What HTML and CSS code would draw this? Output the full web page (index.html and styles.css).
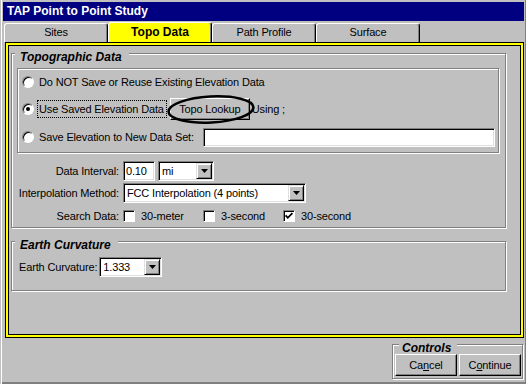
FILE: index.html
```html
<!DOCTYPE html>
<html>
<head>
<meta charset="utf-8">
<title>TAP Point to Point Study</title>
<link rel="stylesheet" href="styles.css">
</head>
<body>
<div class="window">
  <div class="titlebar">TAP Point to Point Study</div>
  <div class="tabs">
    <div class="tab">Sites</div>
    <div class="tab active">Topo Data</div>
    <div class="tab">Path Profile</div>
    <div class="tab">Surface</div>
  </div>
  <div class="panel">
    <div class="group topo">
      <div class="legend">Topographic Data</div>
      <div class="subframe">
        <div class="opt opt1"><span class="radio"></span><span class="opt-label">Do NOT Save or Reuse Existing Elevation Data</span></div>
        <div class="opt opt2"><span class="radio checked"></span><span class="opt-label focus">Use Saved Elevation Data</span><span class="button lookup">Topo Lookup<svg class="circle" viewBox="0 0 88 29" width="88" height="29"><ellipse cx="44" cy="14.5" rx="42.5" ry="13" transform="rotate(-3 44 14.5)" fill="none" stroke="#000" stroke-width="2.6"/></svg></span><span class="using">Using ;</span></div>
        <div class="opt opt3"><span class="radio"></span><span class="opt-label">Save Elevation to New Data Set:</span><span class="textbox dataset"></span></div>
      </div>
      <div class="field interval">
        <span class="label">Data Interval:</span>
        <span class="textbox interval-box">0.10</span>
        <span class="combo unit"><span class="combo-text">mi</span><span class="drop"><svg width="7" height="4" viewBox="0 0 7 4"><polygon points="0,0 7,0 3.5,4" fill="#000"/></svg></span></span>
      </div>
      <div class="field method-row">
        <span class="label">Interpolation Method:</span>
        <span class="combo method"><span class="combo-text">FCC Interpolation (4 points)</span><span class="drop"><svg width="7" height="4" viewBox="0 0 7 4"><polygon points="0,0 7,0 3.5,4" fill="#000"/></svg></span></span>
      </div>
      <div class="field search">
        <span class="label">Search Data:</span>
        <span class="check-item"><span class="checkbox"></span><span class="check-text">30-meter</span></span>
        <span class="check-item"><span class="checkbox"></span><span class="check-text">3-second</span></span>
        <span class="check-item"><span class="checkbox"><svg width="10" height="10" viewBox="0 0 10 10"><polyline points="1.6,4.4 3.8,6.8 8.4,2.2" fill="none" stroke="#000" stroke-width="1.8"/></svg></span><span class="check-text">30-second</span></span>
      </div>
    </div>
    <div class="group earth">
      <div class="legend">Earth Curvature</div>
      <div class="field earth-row">
        <span class="earth-label">Earth Curvature:</span>
        <span class="combo curv"><span class="combo-text">1.333</span><span class="drop"><svg width="7" height="4" viewBox="0 0 7 4"><polygon points="0,0 7,0 3.5,4" fill="#000"/></svg></span></span>
      </div>
    </div>
  </div>
  <div class="footer">
    <div class="group controls">
      <div class="legend">Controls</div>
      <div class="btnrow">
        <span class="button btn">Ca<u>n</u>cel</span>
        <span class="button btn">C<u>o</u>ntinue</span>
      </div>
    </div>
  </div>
</div>
</body>
</html>
```
FILE: styles.css
```css
html, body {
  margin: 0;
  padding: 0;
  background: #c0c0c0;
}
body {
  font-family: "Liberation Sans", Arial, sans-serif;
  font-size: 11px;
  letter-spacing: -0.15px;
  color: #000;
}
.window {
  width: 526px;
  height: 384px;
  box-sizing: border-box;
  padding: 2px 2px 0 3px;
  display: flex;
  flex-direction: column;
  overflow: hidden;
  box-shadow: inset 1px 0 0 #c0c0c0, inset 2px 0 0 #fff, inset 0 -2px 0 #808080, inset -1px 0 0 #808080;
}
.titlebar {
  height: 19px;
  flex: none;
  background: #000080;
  color: #fff;
  font-weight: bold;
  font-size: 12px;
  letter-spacing: 0;
  line-height: 19px;
  padding-left: 4px;
}
.tabs {
  display: flex;
  flex: none;
  height: 20px;
  margin-top: 1px;
  padding-left: 1px;
}
.tab {
  width: 104px;
  box-sizing: border-box;
  margin-top: 1px;
  height: 19px;
  border-top: 1px solid #fff;
  border-left: 1px solid #fff;
  border-right: 1px solid #000;
  box-shadow: inset -1px 0 0 #808080;
  border-radius: 3px 3px 0 0;
  text-align: center;
  line-height: 17px;
}
.tab.active {
  margin-top: 0;
  height: 20px;
  background: #ffff00;
  font-weight: bold;
  font-size: 12px;
  letter-spacing: 0;
  line-height: 19px;
}
.panel {
  flex: none;
  margin-left: 2px;
  height: 296px;
  box-sizing: border-box;
  border: 1px solid #000;
  box-shadow: inset 0 0 0 2px #ffff00, inset 0 0 0 3px #000;
  padding: 10px 0 0 5px;
  display: flex;
  flex-direction: column;
  align-items: flex-start;
}
.group {
  box-sizing: border-box;
  width: 495px;
  border: 1px solid #808080;
  box-shadow: inset 1px 1px 0 #fff, 1px 1px 0 #fff;
  display: flex;
  flex-direction: column;
  align-items: flex-start;
}
.legend {
  margin: -4px 0 0 3px;
  padding: 0 7px 0 5px;
  background: #c0c0c0;
  font-weight: bold;
  font-style: italic;
  font-size: 12px;
  letter-spacing: 0;
  line-height: 14px;
}
.subframe {
  margin: 4px 0 0 5px;
  width: 482px;
  box-sizing: border-box;
  border: 1px solid #808080;
  box-shadow: inset 1px 1px 0 #fff, 1px 1px 0 #fff;
  padding: 0 0 1px 4px;
}
.opt {
  display: flex;
  align-items: center;
}
.opt1 { height: 26px; }
.opt2 { height: 28px; }
.opt3 { height: 28px; }
.radio {
  flex: none;
  position: relative;
  width: 12px;
  height: 12px;
  box-sizing: border-box;
  border-radius: 50%;
  background: #fff;
  border: 1px solid;
  border-color: #808080 #fff #fff #808080;
  box-shadow: inset 1px 1px 0 #000;
}
.radio.checked::after {
  content: "";
  position: absolute;
  left: 3px;
  top: 3px;
  width: 4px;
  height: 4px;
  border-radius: 50%;
  background: #000;
}
.opt-label {
  margin-left: 3px;
  padding: 1px 2px 1px 1px;
  border: 1px dotted transparent;
  line-height: 14px;
  white-space: nowrap;
}
.opt-label.focus {
  border-color: #000;
}
.button {
  flex: none;
  box-sizing: border-box;
  height: 22px;
  border: 1px solid;
  border-color: #fff #000 #000 #fff;
  box-shadow: inset -1px -1px 0 #808080;
  display: flex;
  align-items: center;
  justify-content: center;
  white-space: nowrap;
}
.lookup {
  position: relative;
  width: 80px;
  margin-left: 3px;
}
.circle {
  position: absolute;
  left: -4px;
  top: -4px;
  overflow: visible;
}
.using {
  margin-left: 2px;
  white-space: nowrap;
}
.textbox {
  flex: none;
  box-sizing: border-box;
  background: #fff;
  border: 1px solid;
  border-color: #808080 #fff #fff #808080;
  box-shadow: inset 1px 1px 0 #000, inset -1px -1px 0 #dfdfdf;
}
.dataset {
  width: 292px;
  height: 19px;
  margin-left: auto;
  margin-right: 3px;
}
.field {
  display: flex;
  align-items: center;
  height: 20px;
  flex: none;
}
.label {
  flex: none;
  width: 107px;
  text-align: right;
  margin-right: 4px;
  white-space: nowrap;
}
.interval { margin-top: 8px; }
.method-row { margin-top: 2px; }
.search { margin-top: 3px; margin-bottom: 1px; }
.interval-box {
  width: 32px;
  height: 20px;
  display: flex;
  align-items: center;
  padding-left: 2px;
}
.combo {
  flex: none;
  display: flex;
  align-items: center;
  box-sizing: border-box;
  height: 20px;
  background: #fff;
  border: 1px solid;
  border-color: #808080 #fff #fff #808080;
  box-shadow: inset 1px 1px 0 #000, inset -1px -1px 0 #dfdfdf;
  padding: 1px;
}
.combo-text {
  flex: 1;
  padding-left: 2px;
  white-space: nowrap;
  overflow: hidden;
}
.drop {
  flex: none;
  box-sizing: border-box;
  width: 16px;
  height: 16px;
  background: #c0c0c0;
  border: 1px solid;
  border-color: #dfdfdf #000 #000 #dfdfdf;
  box-shadow: inset 1px 1px 0 #fff, inset -1px -1px 0 #808080;
  display: flex;
  align-items: center;
  justify-content: center;
}
.drop svg { display: block; }
.unit { width: 56px; margin-left: 3px; }
.method { width: 183px; }
.check-item {
  flex: none;
  display: flex;
  align-items: center;
  width: 80px;
}
.checkbox {
  flex: none;
  width: 12px;
  height: 12px;
  box-sizing: border-box;
  background: #fff;
  border: 1px solid;
  border-color: #808080 #fff #fff #808080;
  box-shadow: inset 1px 1px 0 #000;
  display: flex;
}
.checkbox svg { display: block; }
.check-text {
  margin-left: 6px;
  white-space: nowrap;
}
.earth {
  margin-top: 13px;
  padding-bottom: 13px;
}
.earth-row {
  margin-top: 5px;
  padding-left: 7px;
}
.earth-label {
  margin-right: 2px;
  white-space: nowrap;
}
.curv { width: 63px; }
.footer {
  flex: none;
  display: flex;
  justify-content: flex-end;
  padding-right: 1px;
}
.controls {
  width: 131px;
  margin-top: 6px;
  padding: 0 0 2px 2px;
}
.controls .legend {
  margin-left: 4px;
  padding: 0 6px 0 3px;
}
.btnrow {
  display: flex;
  gap: 2px;
  margin-top: -1px;
}
.btn { width: 62px; }
```
